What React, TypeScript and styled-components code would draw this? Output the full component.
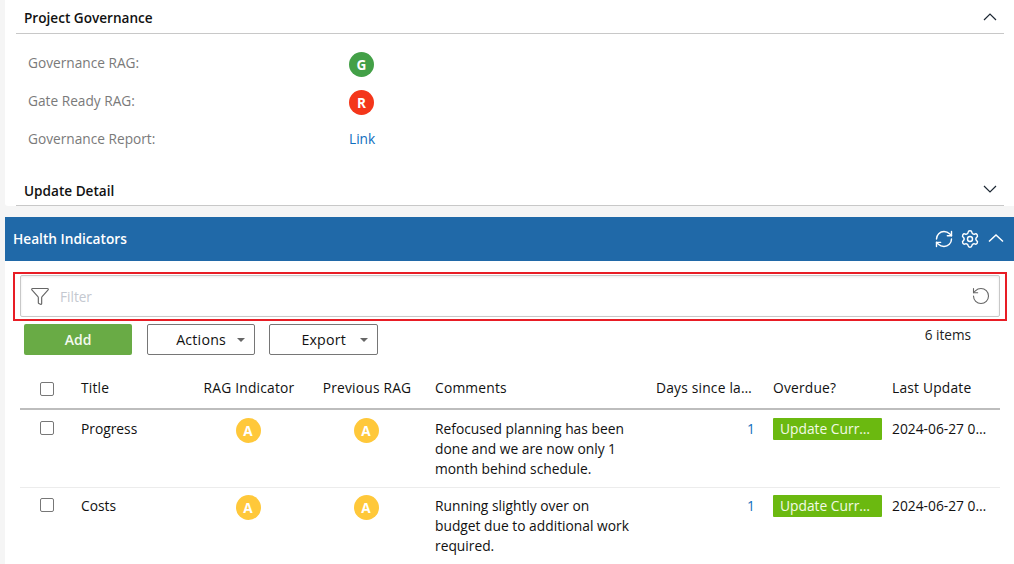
import React from 'react'
import styled, { createGlobalStyle } from 'styled-components'
import { Funnel, RefreshCw, RotateCcw, Settings } from 'lucide-react'

const Global = createGlobalStyle`
  html, body {
    margin: 0;
    height: 564px;
    overflow: hidden;
    background: #f5f5f5;
    font-family: "Open Sans", "Noto Sans", sans-serif;
    font-size: 14px;
    color: #111;
  }
  * { box-sizing: border-box; }
`

const Page = styled.div`
  padding-left: 5px;
  width: 1014px;
`
const TopCard = styled.section`
  background: white;
  height: 206px;
  padding: 0 10px 0 11px;
  border-bottom-left-radius: 3px;
`
const SectionHead = styled.div`
  height: 34px;
  display: flex;
  align-items: center;
  justify-content: space-between;
  padding: 0 6px 0 8px;
  border-bottom: 1px solid #c8c8c8;
  font-size: 13.6px;
  font-weight: 600;
  color: #111;
`
const SectionTitle = styled.span<{ $top: number }>`
  padding-top: ${(p) => p.$top}px;
`
const Fields = styled.div`
  padding: 11px 0 0 12px;
  height: 138px;
`
const Field = styled.div`
  display: grid;
  grid-template-columns: 321px 1fr;
  height: 38px;
  align-items: center;
  font-size: 13.7px;
  color: #7a7a7a;
`
const Label = styled.span`
  margin-bottom: 4px;
`
const Rag = styled.span<{ $c: string }>`
  width: 25px;
  height: 25px;
  border-radius: 50%;
  background: ${(p) => p.$c};
  color: white;
  font-size: 13.6px;
  font-weight: 700;
  display: inline-flex;
  align-items: center;
  justify-content: center;
  vertical-align: top;
`
const CellRag = styled(Rag)`
  margin: -1px 2px 0 0;
`
const LinkText = styled.a`
  color: #106ebe;
  margin-bottom: 4px;
`
const Chevron = styled.svg`
  width: 16px;
  height: 10px;
  fill: none;
  stroke: #1c2733;
  stroke-width: 1.2;
`
const PanelChevron = styled(Chevron)`
  stroke: white;
  stroke-width: 1.5;
  margin: 0 0 3px 2px;
`
const Panel = styled.section`
  margin-top: 11px;
  background: white;
  min-height: 347px;
`
const PanelHead = styled.header`
  height: 44px;
  background: #2069a8;
  color: white;
  display: flex;
  align-items: center;
  padding: 0 10px 0 8px;
  font-size: 13.7px;
  font-weight: 600;
`
const PanelTitle = styled.span`
  flex: 1;
  margin-bottom: 2px;
`
const HeadIcons = styled.div`
  display: flex;
  align-items: center;
  gap: 6px;
`
const PanelBody = styled.div`
  padding: 11px 7px 0 8px;
`
const FilterOutline = styled.div`
  height: 49px;
  border: 2px solid #e81d25;
  padding: 1px 5px;
`
const FilterBox = styled.div`
  height: 42px;
  border: 1px solid #c8c8c8;
  border-radius: 2px;
  box-shadow: inset 0 1px 3px rgba(0, 0, 0, 0.08);
  display: flex;
  align-items: center;
  padding: 0 8px 0 9px;
  gap: 10px;
  color: #666;
`
const FilterText = styled.span`
  flex: 1;
  color: #c4c8d0;
  font-size: 13.6px;
`
const Toolbar = styled.div`
  display: flex;
  align-items: flex-start;
  margin-top: 3px;
  padding: 0 36px 0 11px;
  height: 52px;
`
const AddButton = styled.button`
  width: 108px;
  height: 31px;
  border: 0;
  border-radius: 2px;
  background: #69ab45;
  color: #f4f9ef;
  font: 600 14px "Open Sans", sans-serif;
`
const MenuButton = styled.button<{ $w: number; $gap: number; $left: number }>`
  width: ${(p) => p.$w}px;
  height: 31px;
  margin-left: ${(p) => p.$left}px;
  background: white;
  border: 1px solid #767676;
  border-radius: 2px;
  font: 400 14.2px "Open Sans", sans-serif;
  letter-spacing: 0.2px;
  color: #111;
  display: flex;
  align-items: center;
  justify-content: flex-end;
  padding: 0 9px 0 0;
  gap: ${(p) => p.$gap}px;
  &::after {
    content: '';
    border-left: 4px solid transparent;
    border-right: 4px solid transparent;
    border-top: 4px solid #666;
  }
`
const Count = styled.span`
  margin-left: auto;
  font-size: 13.6px;
  line-height: 20px;
  margin-top: 1px;
  color: #222;
`
const Table = styled.table`
  width: 980px;
  margin-left: 7px;
  table-layout: fixed;
  border-collapse: collapse;
  font-size: 13.8px;
`
const Th = styled.th<{ $center?: boolean; $tight?: boolean }>`
  height: 33px;
  padding: 0 ${(p) => (p.$tight ? 11 : 8)}px 9px 8px;
  font-weight: 400;
  letter-spacing: 0.2px;
  text-align: ${(p) => (p.$center ? 'center' : 'left')};
  white-space: nowrap;
  overflow: hidden;
  text-overflow: ellipsis;
  border-bottom: 2px solid #bdbdbd;
  color: #111;
`
const Td = styled.td<{ $align?: string; $pr?: number }>`
  padding: 9px ${(p) => p.$pr ?? 8}px 8px 8px;
  line-height: 20px;
  vertical-align: top;
  text-align: ${(p) => p.$align || 'left'};
  color: #111;
`
const Tr = styled.tr`
  border-bottom: 1px solid #ececec;
  & + & td {
    padding-top: 8px;
  }
`
const Check = styled.span`
  display: block;
  width: 14px;
  height: 14px;
  margin: 2px 0 0 12px;
  border: 1px solid #777;
  border-radius: 2px;
`
const DayCount = styled.span`
  color: #106ebe;
`
const Badge = styled.span`
  display: block;
  width: 109px;
  height: 22px;
  margin-top: -1px;
  padding: 0 7px;
  background: #6bb910;
  color: #f3fae6;
  border-radius: 1px;
  line-height: 21px;
  white-space: nowrap;
  overflow: hidden;
  text-overflow: ellipsis;
`
const Clip = styled.div`
  white-space: nowrap;
  overflow: hidden;
  text-overflow: ellipsis;
  width: 96px;
`

const rows = [
  { title: 'Progress', comment: 'Refocused planning has been done and we are now only 1 month behind schedule.' },
  { title: 'Costs', comment: 'Running slightly over on budget due to additional work required.' },
]

export default function App() {
  return (
    <Page>
      <Global />
      <TopCard>
        <SectionHead>
          <SectionTitle $top={2}>Project Governance</SectionTitle>
          <Chevron viewBox="0 0 16 10">
            <path d="M2 8 8 2l6 6" />
          </Chevron>
        </SectionHead>
        <Fields>
          <Field>
            <Label>Governance RAG:</Label>
            <Rag $c="#43a047">G</Rag>
          </Field>
          <Field>
            <Label>Gate Ready RAG:</Label>
            <Rag $c="#f4361a">R</Rag>
          </Field>
          <Field>
            <Label>Governance Report:</Label>
            <LinkText>Link</LinkText>
          </Field>
        </Fields>
        <SectionHead>
          <SectionTitle $top={4}>Update Detail</SectionTitle>
          <Chevron viewBox="0 0 16 10">
            <path d="M2 2l6 6 6-6" />
          </Chevron>
        </SectionHead>
      </TopCard>
      <Panel>
        <PanelHead>
          <PanelTitle>Health Indicators</PanelTitle>
          <HeadIcons>
            <RefreshCw size={20} strokeWidth={1.7} />
            <Settings size={20} strokeWidth={1.7} />
            <PanelChevron viewBox="0 0 16 10">
              <path d="M1 8.5 8 2l7 6.5" />
            </PanelChevron>
          </HeadIcons>
        </PanelHead>
        <PanelBody>
          <FilterOutline>
            <FilterBox>
              <Funnel size={20} strokeWidth={1.4} />
              <FilterText>Filter</FilterText>
              <RotateCcw size={20} strokeWidth={1.3} />
            </FilterBox>
          </FilterOutline>
          <Toolbar>
            <AddButton>Add</AddButton>
            <MenuButton $w={108} $gap={11} $left={15}>Actions</MenuButton>
            <MenuButton $w={109} $gap={14} $left={14}>Export</MenuButton>
            <Count>6 items</Count>
          </Toolbar>
          <Table>
            <colgroup>
              <col width={53} />
              <col width={118} />
              <col width={116} />
              <col width={120} />
              <col width={221} />
              <col width={117} />
              <col width={119} />
              <col width={116} />
            </colgroup>
            <thead>
              <tr>
                <Th><Check /></Th>
                <Th>Title</Th>
                <Th $center>RAG Indicator</Th>
                <Th $center>Previous RAG</Th>
                <Th>Comments</Th>
                <Th $tight>Days since last update</Th>
                <Th>Overdue?</Th>
                <Th>Last Update</Th>
              </tr>
            </thead>
            <tbody>
              {rows.map((r) => (
                <Tr key={r.title}>
                  <Td><Check /></Td>
                  <Td>{r.title}</Td>
                  <Td $align="center"><CellRag $c="#ffc83a">A</CellRag></Td>
                  <Td $align="center"><CellRag $c="#ffc83a">A</CellRag></Td>
                  <Td $pr={13}>{r.comment}</Td>
                  <Td $align="right" $pr={10}><DayCount>1</DayCount></Td>
                  <Td><Badge>Update Current Status</Badge></Td>
                  <Td><Clip>2024-06-27 09:30</Clip></Td>
                </Tr>
              ))}
            </tbody>
          </Table>
        </PanelBody>
      </Panel>
    </Page>
  )
}
